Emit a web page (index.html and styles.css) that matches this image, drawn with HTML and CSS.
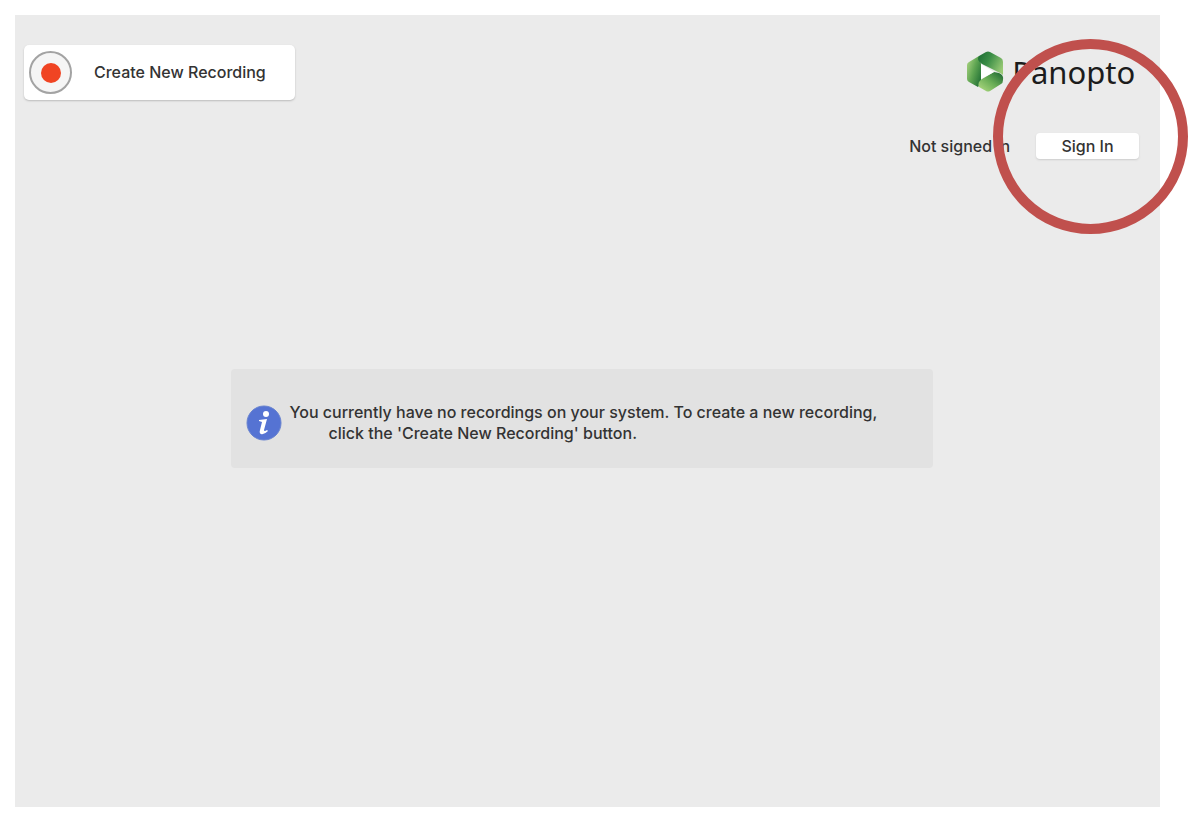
FILE: index.html
```
<!DOCTYPE html>
<html lang="en">

<head>
    <meta charset="UTF-8">
    <meta name="viewport" content="width=device-width, initial-scale=1.0">
    <title>Panopto</title>
    <link rel="stylesheet" href="styles.css">
</head>

<body>
    <main class="window">
        <header class="header">
            <button class="record-btn" type="button">
                <span class="record-icon"></span>
                Create New Recording
            </button>

            <div class="account">
                <div class="logo">
                    <svg class="logo-mark" viewBox="0 0 38 42" aria-hidden="true">
                        <defs>
                            <linearGradient id="left" x1="0" y1="0.2" x2="1" y2="0.9">
                                <stop offset="0" stop-color="#a5d07e"/>
                                <stop offset="0.45" stop-color="#5fa552"/>
                                <stop offset="1" stop-color="#1d6c33"/>
                            </linearGradient>
                            <linearGradient id="top" x1="0" y1="0.2" x2="1" y2="0.7">
                                <stop offset="0" stop-color="#1f6f35"/>
                                <stop offset="0.4" stop-color="#3a8d46"/>
                                <stop offset="1" stop-color="#9acb76"/>
                            </linearGradient>
                            <linearGradient id="bottom" x1="0" y1="1" x2="1" y2="0">
                                <stop offset="0" stop-color="#b4dd83"/>
                                <stop offset="0.5" stop-color="#69ad56"/>
                                <stop offset="1" stop-color="#18622f"/>
                            </linearGradient>
                        </defs>
                        <path fill="url(#left)" d="M3 11 L13 5 L15 13 V32 L12 36 L3 31 Q1 30 1 28 V14 Q1 12 3 11Z"/>
                        <path fill="url(#top)" d="M13 5 L20 1 Q22 0 24 1 L35 7 Q37 8 37 11 V24 Q36 23 34 22 L16 13 Q10 9 13 5Z"/>
                        <path fill="url(#bottom)" d="M28 21 L33 22 Q38 24 37 29 Q37 32 35 33 L24 40 Q22 41 20 40 L13 36 Q11 31 16 28Z"/>
                        <path fill="#fff" d="M15 13 L28 21 L15 28Z"/>
                    </svg>
                    <span class="logo-name">Panopto</span>
                    <span class="logo-tm">™</span>
                </div>
                <div class="sign-in">
                    <span>Not signed in</span>
                    <button class="sign-in-btn" type="button">Sign In</button>
                    <span class="highlight"></span>
                </div>
            </div>
        </header>

        <section class="notice">
            <svg class="info-icon" viewBox="0 0 36 36" aria-hidden="true">
                <circle cx="18" cy="18" r="17" fill="#5573d3" stroke="#6883cf"/>
                <circle cx="20" cy="9" r="3" fill="#fff"/>
                <path fill="#fff" d="M13 15 L21 14 L18 25 Q18 27 21 25 L22 26 Q18 30 15 29 Q13 28 14 25 L16 17 L13 16Z"/>
            </svg>
            <p class="notice-text">
                You currently have no recordings on your system. To create a new recording,
                <span class="notice-more">click the 'Create New Recording' button.</span>
            </p>
        </section>
    </main>
</body>

</html>
```

FILE: styles.css
```
* {
    box-sizing: border-box;
}

body {
    display: flex;
    min-height: 100vh;
    margin: 0;
    padding: 15px 40px;
    padding-left: 15px;
    background-color: #fff;
    color: #333;
    font-family: Inter, "Liberation Sans", sans-serif;
    font-size: 16px;
    font-weight: 500;
    line-height: 21px;
}

button {
    border: none;
    background-color: #fff;
    color: inherit;
    font: inherit;
    cursor: pointer;
}

.window {
    flex: 1;
    padding: 30px 21px 30px 9px;
    background-color: #ebebeb;
}

.header {
    display: flex;
    justify-content: space-between;
    align-items: flex-start;
}

.record-btn {
    display: flex;
    align-items: center;
    gap: 22px;
    padding: 6px 29px 6px 5px;
    border-radius: 5px;
    box-shadow: 0 1px 2px #bbb;
}

.record-icon {
    display: flex;
    align-items: center;
    justify-content: center;
    width: 43px;
    height: 43px;
    border: 2px solid #a3a3a3;
    border-radius: 50%;
    background-color: #f5f5f5;
}

.record-icon::before {
    content: "";
    width: 20px;
    height: 20px;
    border-radius: 50%;
    background-color: #f04423;
}

.account {
    display: flex;
    flex-direction: column;
    align-items: flex-end;
    gap: 40px;
    padding-top: 6px;
}

.logo {
    display: flex;
    align-items: center;
    height: 42px;
}

.logo-mark {
    width: 38px;
    height: 42px;
    margin-right: 8px;
}

.logo-name {
    color: #1c1c1c;
    font-family: "Noto Sans", sans-serif;
    font-size: 31px;
    font-weight: 400;
}

.logo-tm {
    align-self: flex-start;
    color: #888;
    font-size: 6px;
}

.sign-in {
    position: relative;
    display: flex;
    align-items: center;
    gap: 26px;
}

.sign-in-btn {
    width: 103px;
    height: 26px;
    padding: 0;
    border-radius: 4px;
    box-shadow: 0 1px 2px #ccc;
}

/* red ring drawn over the sign in button */
.highlight {
    position: absolute;
    top: -94px;
    right: -49px;
    width: 195px;
    height: 195px;
    border: 10px solid #c0504d;
    border-radius: 50%;
    pointer-events: none;
}

.notice {
    display: flex;
    align-items: center;
    gap: 8px;
    max-width: 702px;
    min-height: 99px;
    margin: 210px auto 0;
    padding: 10px 15px;
    border-radius: 4px;
    background-color: #e2e2e2;
}

.info-icon {
    flex: none;
    width: 36px;
    height: 36px;
    margin-top: 8px;
}

.notice-text {
    margin: 8px 0 0;
}

.notice-more {
    display: block;
    padding-left: 39px;
}
```
